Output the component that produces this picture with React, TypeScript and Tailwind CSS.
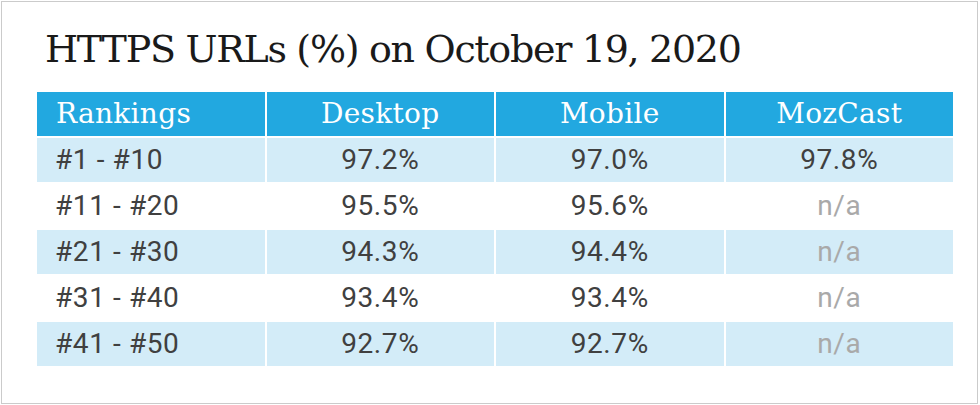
const rows = [
  { rank: "#1 - #10", desktop: "97.2%", mobile: "97.0%", moz: "97.8%" },
  { rank: "#11 - #20", desktop: "95.5%", mobile: "95.6%", moz: "n/a" },
  { rank: "#21 - #30", desktop: "94.3%", mobile: "94.4%", moz: "n/a" },
  { rank: "#31 - #40", desktop: "93.4%", mobile: "93.4%", moz: "n/a" },
  { rank: "#41 - #50", desktop: "92.7%", mobile: "92.7%", moz: "n/a" },
];

const slab = { fontFamily: '"DejaVu Serif", serif' };

export default function App() {
  return (
    <div className="w-[980px] h-[405px] bg-white p-px">
      <div className="h-full w-[977px] border border-[#cbcbcb] bg-white pl-[35px] pt-[23px]">
        <h1
          className="pl-[8px] text-[38px] leading-[48px] text-[#1a1a1a] tracking-[-1.3px]"
          style={slab}
        >
          HTTPS URLs (%) on October 19, 2020
        </h1>
        <div
          className="mt-[19px] grid w-[916px] grid-cols-4 gap-[2px] text-[28px] tracking-[0.6px]"
          style={{ fontFamily: 'Roboto, "Liberation Sans", sans-serif' }}
        >
          {["Rankings", "Desktop", "Mobile", "MozCast"].map((h, i) => (
            <div
              key={h}
              className={`flex h-[44px] items-center bg-[#22a8e0] text-[28px] tracking-[0.3px] text-white ${
                i === 0 ? "pl-[19px]" : "justify-center"
              }`}
              style={slab}
            >
              {h}
            </div>
          ))}
          {rows.map((r, idx) => {
            const bg = idx % 2 === 0 ? "bg-[#d3ecf8]" : "bg-white";
            return [
              <div key={r.rank + "a"} className={`flex h-[44px] items-center pl-[18px] text-[#404040] ${bg}`}>
                {r.rank}
              </div>,
              <div key={r.rank + "b"} className={`flex h-[44px] items-center justify-center text-[#404040] ${bg}`}>
                {r.desktop}
              </div>,
              <div key={r.rank + "c"} className={`flex h-[44px] items-center justify-center text-[#404040] ${bg}`}>
                {r.mobile}
              </div>,
              <div
                key={r.rank + "d"}
                className={`flex h-[44px] items-center justify-center ${bg} ${
                  r.moz === "n/a" ? "text-[#a9a9a9]" : "text-[#404040]"
                }`}
              >
                {r.moz}
              </div>,
            ];
          })}
        </div>
      </div>
    </div>
  );
}
